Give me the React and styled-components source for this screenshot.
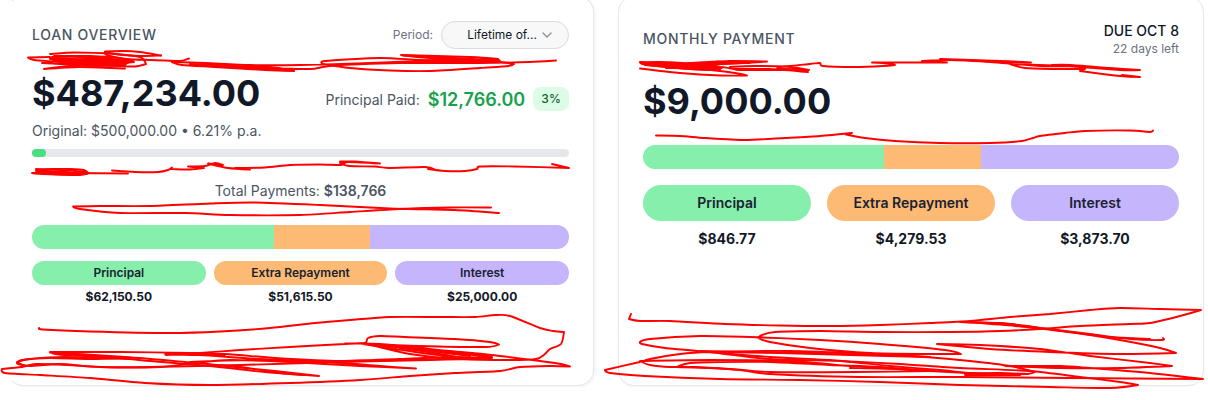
import React from "react";
import styled, { createGlobalStyle } from "styled-components";
import { ChevronDown } from "lucide-react";

const GlobalStyle = createGlobalStyle`
  *, *::before, *::after { box-sizing: border-box; }
  body {
    margin: 0;
    background: #fff;
    font-family: Inter, "Liberation Sans", sans-serif;
    color: #111827;
    overflow: hidden;
  }
`;

const Page = styled.main`
  position: relative;
  width: 1208px;
  height: 400px;
  overflow: hidden;
  display: grid;
  grid-template-columns: 587px 586px;
  grid-template-rows: 386px;
  gap: 24px;
  padding-left: 7px;
`;

const Card = styled.section`
  display: flex;
  flex-direction: column;
  margin-top: -4px;
  padding: 24px;
  background: #fff;
  border: 1px solid #e5e7eb;
  border-left-color: ${(p) => (p.$openLeft ? "transparent" : "#e5e7eb")};
  border-radius: 16px;
  box-shadow: ${(p) => (p.$openLeft ? "2px 1px 2px" : "0 1px 2px")} rgba(0, 0, 0, 0.04);
`;

const CardHeader = styled.header`
  display: flex;
  justify-content: space-between;
  align-items: center;
  height: ${(p) => p.$height}px;
`;

const CardTitle = styled.h2`
  margin: 0;
  font-size: 14px;
  line-height: 20px;
  font-weight: 500;
  letter-spacing: 0.7px;
  color: #4b5563;
  text-transform: uppercase;
`;

const PeriodGroup = styled.div`
  display: flex;
  align-items: center;
  gap: 8px;
`;

const PeriodLabel = styled.span`
  font-size: 12px;
  line-height: 16px;
  color: #6b7280;
`;

const PeriodSelect = styled.button`
  display: flex;
  align-items: center;
  justify-content: flex-end;
  gap: 2px;
  width: 128px;
  height: 28px;
  padding: 0 13px 0 0;
  border: 1px solid #d9dbde;
  border-radius: 14px;
  background: #f8f8f8;
  font: 400 12px/16px Inter, sans-serif;
  color: #111827;
  svg { color: #8b8f96; }
`;

const DueInfo = styled.div`
  text-align: right;
`;

const DueDate = styled.div`
  font-size: 14px;
  line-height: 20px;
  font-weight: 500;
`;

const DueNote = styled.div`
  font-size: 12px;
  line-height: 16px;
  color: #6b7280;
`;

const BalanceRow = styled.div`
  display: flex;
  justify-content: space-between;
  align-items: flex-end;
  height: 40px;
  margin-top: 24px;
`;

const Amount = styled.div`
  font-size: 36px;
  line-height: 40px;
  font-weight: 700;
`;

const PaidGroup = styled.div`
  display: flex;
  align-items: center;
  gap: 8px;
  height: 28px;
`;

const PaidLabel = styled.span`
  font-size: 14px;
  color: #4b5563;
`;

const PaidAmount = styled.span`
  font-size: 18px;
  font-weight: 600;
  color: #16a34a;
`;

const Badge = styled.span`
  height: 24px;
  padding: 0 8px;
  border-radius: 8px;
  background: #dcfce7;
  font-size: 12px;
  line-height: 24px;
  font-weight: 500;
  letter-spacing: 0.2px;
  color: #166534;
`;

const LoanTerms = styled.div`
  margin-top: 8px;
  font-size: 14px;
  line-height: 20px;
  color: #4b5563;
`;

const Track = styled.div`
  height: 8px;
  margin-top: 8px;
  border-radius: 4px;
  background: #e5e7eb;
`;

const TrackFill = styled.div`
  width: 14px;
  height: 8px;
  border-radius: 4px;
  background: #4ade80;
`;

const TotalPayments = styled.div`
  margin-top: 24px;
  text-align: center;
  font-size: 14px;
  line-height: 20px;
  color: #4b5563;
  strong { font-weight: 600; }
`;

const SplitBar = styled.div`
  display: grid;
  grid-template-columns: 45fr 18fr 37fr;
  height: 24px;
  margin-top: 24px;
  border-radius: 12px;
  overflow: hidden;
`;

const Segment = styled.div`
  background: ${(p) => p.$color};
`;

const Legend = styled.div`
  display: grid;
  grid-template-columns: repeat(3, 1fr);
  gap: ${(p) => (p.$large ? 16 : 8)}px;
  margin-top: ${(p) => (p.$large ? 16 : 12)}px;
  font-size: ${(p) => (p.$large ? 14 : 12)}px;
  text-align: center;
`;

const Pill = styled.div`
  height: ${(p) => (p.$large ? 36 : 24)}px;
  line-height: ${(p) => (p.$large ? 36 : 24)}px;
  border-radius: 18px;
  background: ${(p) => p.$color};
  font-weight: 600;
  color: #1a2232;
`;

const PillValue = styled.div`
  margin-top: ${(p) => (p.$large ? 8 : 4)}px;
  line-height: ${(p) => (p.$large ? 20 : 16)}px;
  font-weight: 700;
`;

const Scribbles = styled.svg`
  position: absolute;
  inset: 0;
  pointer-events: none;
  fill: none;
  stroke: #f00;
  stroke-width: 1.9;
  stroke-linecap: round;
  stroke-linejoin: round;
`;

const colors = ["#86efac", "#fdba74", "#c4b5fd"];
const labels = ["Principal", "Extra Repayment", "Interest"];

function Breakdown({ values, large }) {
  return (
    <>
      <SplitBar>
        {colors.map((c) => <Segment key={c} $color={c} />)}
      </SplitBar>
      <Legend $large={large}>
        {labels.map((label, i) => (
          <div key={label}>
            <Pill $large={large} $color={colors[i]}>{label}</Pill>
            <PillValue $large={large}>{values[i]}</PillValue>
          </div>
        ))}
      </Legend>
    </>
  );
}

// Freehand pen marks, one list of x,y points for each stroke.
const strokes = [
  // below the loan heading
  "52,57 80,57 110,59 134,62 100,64 60,60 50,58 85,61 128,63 75,65 62,61 100,58 125,61 95,62 58,58 54,60 90,63 120,61 70,59",
  "54,56 90,56 118,58 133,61 120,64 90,65.5 64,63 56,60 90,59.5 122,62.5 90,64 60,61.5 55,58.5 100,60.5 126,64",
  "50,57 28,57.5 34,60 60,62 90,65 125,65 75,60 42,63 60,64 82,65 60,67 44,69 80,67 125,68.5",
  "50,54 75,52.5 115,54 140,57 146,64 135,66.5 115,66 75,65 50,59",
  "161,55.5 140,52 122,51 105,51.5 107,55 127,59 150,60 180,61 189,58.5",
  "161,55.5 140,56 118,54.5 105,52",
  "172,62 205,63 250,65 300,65 370,63 418,61 420,62 440,61.5 498,59 470,57 401,55 430,58 500,61 465,61 420,60 380,58 325,61 323,64 350,68 390,70.5 430,71 480,68 508,66 514,64 490,61 440,59",
  "172,62 182,65 215,67 265,70 294,71 270,67 225,66 190,64 220,65 268,68 310,69 323,67 340,65 400,63 480,63 530,62 556,60.5",
  "222,66 250,68 280,70 294,70.5 268,68",
  "403,55.5 440,57 480,59.5 499,60 460,59 425,60.5",
  // around the progress bar
  "36,169 60,170 86,172 87,174 60,174.5 35,173.5 32,173 70,173 128,173.5",
  "36,170 52,169 70,169 84,170 88,173 80,175 48,173.5 36,171 60,171.5 80,173.5",
  "112,170.5 135,172 158,172 168,170 172,167.5 171,169 190,169.5 204,168 188,166.5 205,166 215,163 223,165 208,163.5 228,168 250,169.5 235,168 265,167.5 290,165 320,164.5 341,165 345,163 340,161.5 355,161.5 380,163.5 350,162 340,163 349,166 375,166.5 388,168 425,167 435,169.5 428,169 445,171 465,171 477,169 480,166.5 515,166.5 569,168 552,164",
  // below the total
  "499,213 455,210 390,208.5 320,205 255,202.5 210,203.5 150,206 100,206 73,206.5 80,209 120,213 185,213 230,215 300,215 350,212 400,209 450,207.5 491,207.5",
  // bottom of the loan card
  "39,328 43,329.5 90,331.5 170,333 220,331.5 270,328 315,323 350,320 390,317 440,317 475,317 495,315 510,316 540,328 553,331 564,332 561,344 550,349 545,354 536,359 510,360 460,359 410,354 375,346 360,343.5 420,346 485,347 499,344.5 490,342 455,339 405,337 380,336 368,338 365,343 345,344 290,347 240,350 200,353 166,355 170,353 225,354 275,358 340,361 400,359 450,357 492,358 470,354 400,347 363,344 430,354 475,359 430,360 340,362 240,365 150,367 100,367 68,365 36,364 22,367 2,369 5,373 40,375 90,378 145,383 210,385 290,383 360,380 410,376 455,373 500,371 520,367 550,366 570,366.5 555,363 500,356 450,351 380,344 345,343.5",
  "50,352 120,352 190,353 225,355 195,355 167,354 200,355 260,359 330,362 380,366 416,368.5 360,366 290,362 230,360 195,363 160,367 100,367 60,364 30,366 18,364 17,362 30,359 65,357 130,359 105,356 50,352.5 125,357 185,362 240,367 280,373 319,376 275,371 225,366 190,362 250,360 330,361 400,360 470,358 488,356 430,350 380,345 420,350 470,356",
  "26,366 18,363 22,360 50,358 90,359 125,358 65,355 52,353 100,356 150,361 210,366 265,372 305,375",
  "385,345 430,350 470,354.5 492,357 470,358.5 440,354 400,348",
  // below the monthly heading
  "640,62 670,63 720,64 767,61.5 730,61 690,63 645,65 680,68 720,70 705,65 660,62 643,63 700,66 720,68 675,66 650,64 684,65 720,69 690,69 653,65 700,63 750,63 717,61.5",
  "642,63.5 680,64 715,66 722,68 690,67 655,64 690,65 718,70 700,69 670,66.5",
  "680,63 640,62.5 648,65 690,69 717,70 722,67 735,69 770,69 808,72 788,70 740,70 730,67 755,66 790,67 809,70 780,68.5 780,67 810,64 820,63 823,66 855,67 883,66 895,65 888,63.5 872,62.5 947,62.5 922,61 950,60 980,61 1031,62.5 1000,61 940,59 955,60 990,62 1040,66 1070,66 1052,65 1120,70 1140,70 1110,68 1070,65 1052,65 1070,66 1010,64 1025,68 1050,69 1085,69 1080,71 1120,76 1140,77 1122,75",
  "640,68.5 680,73 720,75.5 747,75.5 735,73 700,69 666,68",
  // above the monthly bar
  "656,135.5 680,136 705,138 745,140 785,138 820,136 852,133 846,134.5 865,138 895,141 940,143 990,143 1022,141 1033,138 1040,136 1065,133 1085,131 1130,130.5 1150,132 1153,130.5",
  // bottom of the monthly card
  "631,314 629,319 640,321 670,321 725,324 780,325.5 830,326 880,325 930,323 970,321 1010,317 1050,314 1090,310 1120,308 1160,309 1201,310 1180,316 1150,323 1130,324 1080,326 1040,329 1000,331 950,332 880,332 820,331 775,332 762,335 758,338 770,342 810,348 870,353 930,354 961,354 945,350 880,344 820,340 750,337 700,336 650,339 640,342 642,344 665,348 710,352 770,357 830,360 890,366 940,370 980,374 1025,374 1035,372 1010,366 970,361 925,357 870,354 790,351 710,352 680,354 650,359 642,362 650,365 670,367 695,367 740,370 770,374 860,377 960,377 1070,378 1203,379 1150,373 1090,368 1060,366 1005,366 1060,368 1120,368 1172,366 1150,363 1090,356 1040,349 980,345 937,344 990,349 1050,352 1120,354 1176,353 1160,348 1120,340 1070,332 1010,324 960,322",
  "1163,338 1162,340 1130,339 1090,334 1040,328 1000,323 965,322",
  "965,322 1015,326 1060,331 1110,337 1150,339",
  "640,362 605,370 610,373 645,376 720,379 800,380 880,382 960,385 1050,387 1110,388 1138,385 1120,382 1080,377 1030,371 960,368 900,364 840,361 770,359 710,352",
  "676,367 690,363 720,362 770,362 830,365 880,367 930,371 990,374 965,375 1020,375 970,373 910,370 850,366 790,361 710,360 640,361",
  "676,367 730,369 770,372 855,372 935,371 900,369 850,368",
  "700,351 760,352 850,353 930,357 850,355 780,353 710,352",
  "965,373.5 1000,373 1028,374",
];

function smoothPath(points) {
  const p = points.split(" ").map((s) => s.split(",").map(Number));
  let d = `M${p[0]}`;
  for (let i = 0; i < p.length - 1; i++) {
    const a = p[Math.max(i - 1, 0)];
    const b = p[i];
    const c = p[i + 1];
    const e = p[Math.min(i + 2, p.length - 1)];
    // Tangents vanish at reversals so that those stay sharp.
    const turnB = (b[0] - a[0]) * (c[0] - b[0]) < 0 ? 0 : 1 / 8;
    const turnC = (c[0] - b[0]) * (e[0] - c[0]) < 0 ? 0 : 1 / 8;
    d += `C${b[0] + (c[0] - a[0]) * turnB},${b[1] + (c[1] - a[1]) * turnB} ${c[0] - (e[0] - b[0]) * turnC},${c[1] - (e[1] - b[1]) * turnC} ${c}`;
  }
  return d;
}

export default function App() {
  return (
    <>
      <GlobalStyle />
      <Page>
        <Card $openLeft>
          <CardHeader $height={28}>
            <CardTitle>Loan Overview</CardTitle>
            <PeriodGroup>
              <PeriodLabel>Period:</PeriodLabel>
              <PeriodSelect>
                Lifetime of...
                <ChevronDown size={16} />
              </PeriodSelect>
            </PeriodGroup>
          </CardHeader>
          <BalanceRow>
            <Amount>$487,234.00</Amount>
            <PaidGroup>
              <PaidLabel>Principal Paid:</PaidLabel>
              <PaidAmount>$12,766.00</PaidAmount>
              <Badge>3%</Badge>
            </PaidGroup>
          </BalanceRow>
          <LoanTerms>Original: $500,000.00 • 6.21% p.a.</LoanTerms>
          <Track><TrackFill /></Track>
          <TotalPayments>Total Payments: <strong>$138,766</strong></TotalPayments>
          <Breakdown values={["$62,150.50", "$51,615.50", "$25,000.00"]} />
        </Card>
        <Card>
          <CardHeader $height={36}>
            <CardTitle>Monthly Payment</CardTitle>
            <DueInfo>
              <DueDate>DUE OCT 8</DueDate>
              <DueNote>22 days left</DueNote>
            </DueInfo>
          </CardHeader>
          <BalanceRow>
            <Amount>$9,000.00</Amount>
          </BalanceRow>
          <Breakdown large values={["$846.77", "$4,279.53", "$3,873.70"]} />
        </Card>
        <Scribbles width="1208" height="400" viewBox="0 0 1208 400">
          {strokes.map((s) => <path key={s} d={smoothPath(s)} />)}
        </Scribbles>
      </Page>
    </>
  );
}
